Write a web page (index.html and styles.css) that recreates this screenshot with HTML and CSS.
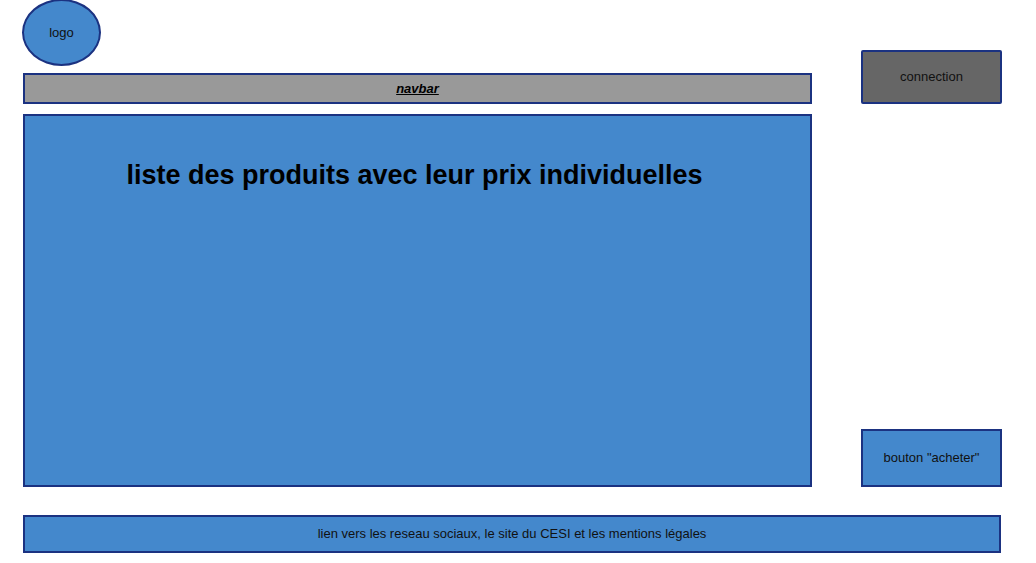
FILE: index.html
```html
<!DOCTYPE html>
<html lang="fr">
<head>
<meta charset="utf-8">
<meta name="viewport" content="width=device-width, initial-scale=1">
<title>Liste des produits</title>
<link rel="stylesheet" href="styles.css">
</head>
<body class="page">
  <header class="row">
    <div class="brand">
      <div class="logo">logo</div>
      <nav class="box navbar"><a class="navbar-link" href="#">navbar</a></nav>
    </div>
    <button class="box login" type="button">connection</button>
  </header>
  <main class="row content">
    <section class="box products">
      <h1 class="title">liste des produits avec leur prix individuelles</h1>
    </section>
    <button class="box buy" type="button">bouton "acheter"</button>
  </main>
  <footer class="box footer">lien vers les reseau sociaux, le site du CESI et les mentions légales</footer>
</body>
</html>
```

FILE: styles.css
```css
* {
  box-sizing: border-box;
}

.page {
  display: flex;
  flex-direction: column;
  min-height: 100vh;
  margin: 0;
  padding: 0 34px 10px 23px;
  background: #fff;
  color: #111;
  font: 13px/16px "Liberation Sans", Arial, sans-serif;
}

.row {
  display: grid;
  grid-template-columns: 1fr 141px;
  column-gap: 49px;
  align-items: end;
}

.box,
.logo {
  display: flex;
  align-items: center;
  justify-content: center;
  border: 2px solid #1b3281;
  background: #4488cc;
  color: inherit;
  font: inherit;
}

.logo {
  width: 79px;
  height: 67px;
  margin: -1px 0 7px -1px;
  border-radius: 50%;
}

.navbar {
  height: 31px;
  background: #999;
}

.navbar-link {
  color: #000;
  font-weight: bold;
  font-style: italic;
}

.login {
  height: 54px;
  border-radius: 2px;
  background: #666;
}

.content {
  flex: 1;
  margin: 10px 0 28px;
}

.products {
  align-self: stretch;
  align-items: flex-start;
  padding: 43px 16px 16px 10px;
}

.title {
  margin: 0;
  color: #000;
  font-size: 27px;
  line-height: 32px;
}

.buy {
  height: 58px;
}

.footer {
  min-height: 38px;
  margin-right: 1px;
}
```
